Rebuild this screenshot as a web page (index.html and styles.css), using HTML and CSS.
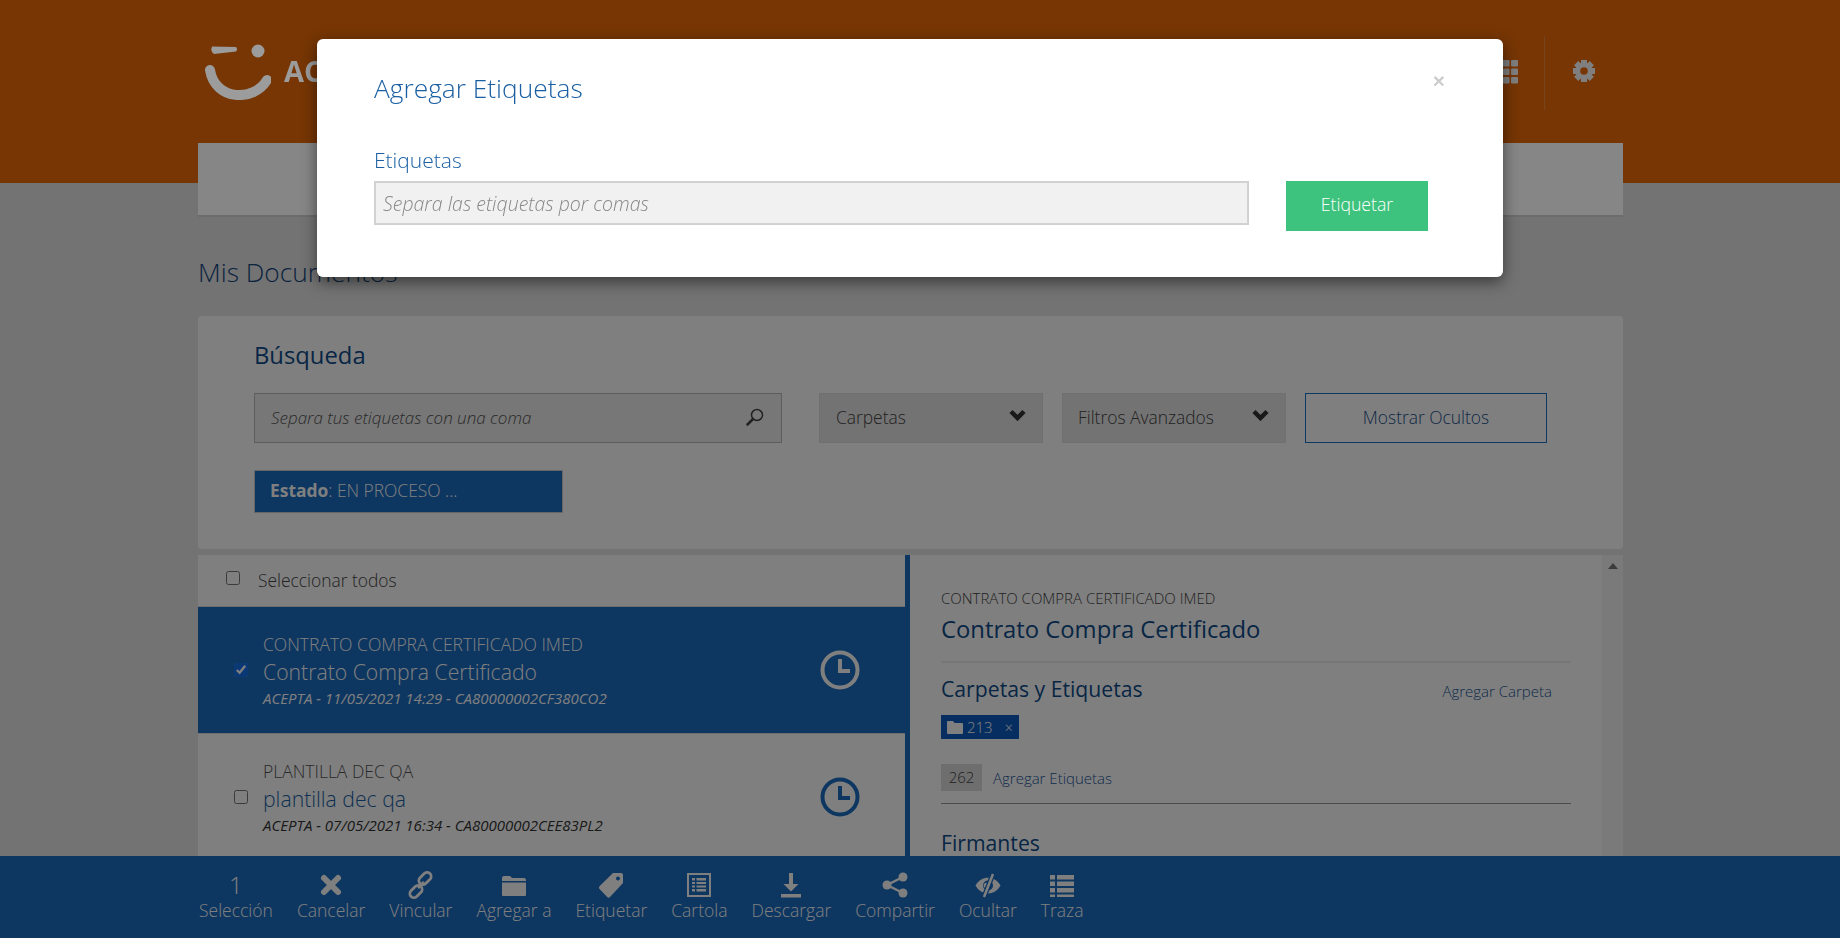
FILE: index.html
```html
<!DOCTYPE html>
<html lang="es">
<head>
<meta charset="utf-8">
<title>Mis Documentos</title>
<link rel="stylesheet" href="styles.css">
</head>
<body>
<header class="topbar">
  <div class="topbar-inner">
    <a class="brand">
      <svg class="brand-mark" width="66" height="56" viewBox="0 0 66 56"><path d="M7 2.500 L31 3 Q33 5 31 7.500 L9 10 Q5 7 7 2.500Z" class="fill-logo"/><circle cx="53" cy="7" r="6.500" class="fill-logo"/><path d="M5 26 C10 57 49 58 62 36" class="arc-logo"/></svg>
      <span class="brand-name">ACEPTA</span>
    </a>
    <div class="top-tools">
      <svg width="24" height="24" viewBox="0 0 24 24" class="fill-icon"><rect x="0" y="0" width="7" height="6.500" rx="1"/><rect x="8.500" y="0" width="7" height="6.500" rx="1"/><rect x="17" y="0" width="7" height="6.500" rx="1"/><rect x="0" y="8.500" width="7" height="6.500" rx="1"/><rect x="8.500" y="8.500" width="7" height="6.500" rx="1"/><rect x="17" y="8.500" width="7" height="6.500" rx="1"/><rect x="0" y="17" width="7" height="6.500" rx="1"/><rect x="8.500" y="17" width="7" height="6.500" rx="1"/><rect x="17" y="17" width="7" height="6.500" rx="1"/></svg>
      <span class="tool-divider"></span>
      <svg width="26" height="26" viewBox="0 0 26 26" class="gear"><g class="gear-teeth"><path d="M13 2v22M2 13h22M5.200 5.200l15.600 15.600M20.800 5.200l-15.600 15.600"/></g><circle cx="13" cy="13" r="8.500"/><circle cx="13" cy="13" r="3.800" class="gear-hole"/></svg>
    </div>
  </div>
</header>

<main class="page">
  <nav class="subnav"></nav>
  <h1 class="page-title">Mis Documentos</h1>

  <section class="search-card">
    <h2 class="search-title">Búsqueda</h2>
    <div class="search-row">
      <div class="search-box">
        <input class="search-input" type="text" placeholder="Separa tus etiquetas con una coma">
        <svg width="18" height="18" viewBox="0 0 18 18" class="search-icon"><circle cx="11" cy="7" r="5.500"/><path d="M7 11 L1.500 16.500" class="search-handle"/></svg>
      </div>
      <div class="dropdown"><span>Carpetas</span><svg width="17" height="12" viewBox="0 0 17 12"><path d="M2 2.500 L8.500 9 L15 2.500" class="chev"/></svg></div>
      <div class="dropdown"><span>Filtros Avanzados</span><svg width="17" height="12" viewBox="0 0 17 12"><path d="M2 2.500 L8.500 9 L15 2.500" class="chev"/></svg></div>
      <button class="ghost-btn" type="button">Mostrar Ocultos</button>
    </div>
    <div class="status-chip"><strong>Estado</strong>: EN PROCESO ...</div>
  </section>

  <section class="docs">
    <div class="doc-list">
      <label class="select-all"><input type="checkbox"><span>Seleccionar todos</span></label>
      <article class="doc-row doc-row-active">
        <input type="checkbox" checked>
        <div class="doc-text">
          <div class="doc-kind">CONTRATO COMPRA CERTIFICADO IMED</div>
          <div class="doc-name">Contrato Compra Certificado</div>
          <div class="doc-meta">ACEPTA - 11/05/2021 14:29 - CA80000002CF380CO2</div>
        </div>
        <svg class="clock" width="40" height="40" viewBox="0 0 40 40"><circle cx="20" cy="20" r="17.500"/><path d="M20 9v12h10"/></svg>
      </article>
      <article class="doc-row">
        <input type="checkbox">
        <div class="doc-text">
          <div class="doc-kind">PLANTILLA DEC QA</div>
          <div class="doc-name">plantilla dec qa</div>
          <div class="doc-meta">ACEPTA - 07/05/2021 16:34 - CA80000002CEE83PL2</div>
        </div>
        <svg class="clock" width="40" height="40" viewBox="0 0 40 40"><circle cx="20" cy="20" r="17.500"/><path d="M20 9v12h10"/></svg>
      </article>
    </div>

    <div class="detail">
      <div class="detail-kind">CONTRATO COMPRA CERTIFICADO IMED</div>
      <div class="detail-name">Contrato Compra Certificado</div>
      <hr class="rule-soft">
      <div class="detail-head">
        <h3 class="detail-title">Carpetas y Etiquetas</h3>
        <a class="detail-link link-carpeta">Agregar Carpeta</a>
      </div>
      <div class="tags">
        <span class="folder-tag">
          <svg width="16" height="13" viewBox="0 0 16 13"><path d="M1 0h5l1.500 2H15a1 1 0 0 1 1 1v9a1 1 0 0 1-1 1H1a1 1 0 0 1-1-1V1a1 1 0 0 1 1-1z"/></svg>
          213<span class="tag-x">×</span>
        </span>
      </div>
      <div class="label-row">
        <span class="count-badge">262</span>
        <a class="detail-link">Agregar Etiquetas</a>
      </div>
      <hr class="rule-strong">
      <h3 class="detail-title firmantes">Firmantes</h3>
    </div>

    <div class="scroll-track"><span class="scroll-up"></span></div>
  </section>
</main>

<footer class="action-bar">
  <div class="action"><span class="action-count">1</span><span>Selección</span></div>
  <div class="action"><svg width="26" height="26" viewBox="0 0 26 26"><path d="M6 6 L20 20 M20 6 L6 20" class="x-mark"/></svg><span>Cancelar</span></div>
  <div class="action"><svg width="26" height="26" viewBox="0 0 26 26"><g class="link-mark"><rect x="13" y="-.5" width="8" height="14" rx="4" transform="rotate(45 17 6.500)"/><rect x="4" y="12.500" width="8" height="14" rx="4" transform="rotate(45 8 19.500)"/><path d="M10 16 L16 10"/></g></svg><span>Vincular</span></div>
  <div class="action"><svg width="26" height="26" viewBox="0 0 26 26"><path d="M1 6a2 2 0 0 1 2-2h6l2 2h12a2 2 0 0 1 2 2v1H1z M1 10.500h24V23a1 1 0 0 1-1 1H2a1 1 0 0 1-1-1z"/></svg><span>Agregar a</span></div>
  <div class="action"><svg width="26" height="26" viewBox="0 0 26 26"><path fill-rule="evenodd" d="M15 1h8a2 2 0 0 1 2 2v8L12 25a2 2 0 0 1-2.800 0L1.500 17a2 2 0 0 1 0-2.800z M20 4.500a2 2 0 1 0 .01 0z"/></svg><span>Etiquetar</span></div>
  <div class="action"><svg width="26" height="26" viewBox="0 0 26 26"><path fill-rule="evenodd" d="M1 1h24v24H1z M3 3v20h20V3z M6 6h3v2.500H6z M10.500 6H20v2.500h-9.500z M6 10h3v2H6z M10.500 10H20v2h-9.500z M6 13.500h3v2H6z M10.500 13.500H20v2h-9.500z M6 17h3v2.500H6z M10.500 17H20v2.500h-9.500z"/></svg><span>Cartola</span></div>
  <div class="action"><svg width="26" height="26" viewBox="0 0 26 26"><path d="M11 1h4v11h5.500L13 19.500 5.500 12H11z M3 22h20v3.500H3z"/></svg><span>Descargar</span></div>
  <div class="action"><svg width="26" height="26" viewBox="0 0 26 26"><circle cx="21" cy="5" r="4.500"/><circle cx="5" cy="13" r="4.500"/><circle cx="21" cy="21" r="4.500"/><path d="M21 5 L5 13 L21 21" class="share-lines"/></svg><span>Compartir</span></div>
  <div class="action"><svg width="26" height="26" viewBox="0 0 26 26"><path d="M.5 13.500C6 3 20 3 25.500 13.500 20 24 6 24 .5 13.500z"/><circle cx="13" cy="13.500" r="5" class="eye-cut"/><circle cx="11.500" cy="13.500" r="2.800"/><path d="M18 2 L9 25" class="eye-gap"/><path d="M18 2 L9 25" class="eye-slash"/></svg><span>Ocultar</span></div>
  <div class="action"><svg width="26" height="26" viewBox="0 0 26 26"><path d="M1 3h5v4.500H1z M8 3h17v4.500H8z M1 9.500h5V14H1z M8 9.500h17V14H8z M1 16h5v4.500H1z M8 16h17v4.500H8z M1 22.500h5V25H1z M8 22.500h17V25H8z"/></svg><span>Traza</span></div>
</footer>

<div class="backdrop"></div>

<div class="modal" role="dialog">
  <button class="modal-close" type="button">×</button>
  <h2 class="modal-title">Agregar Etiquetas</h2>
  <label class="modal-label" for="tags">Etiquetas</label>
  <div class="modal-row">
    <input id="tags" class="modal-input" type="text" placeholder="Separa las etiquetas por comas">
    <button class="modal-submit" type="button">Etiquetar</button>
  </div>
</div>
</body>
</html>
```

FILE: styles.css
```css
* { box-sizing: border-box; }
html, body { margin: 0; height: 938px; overflow: hidden; }
body { background: #e6e6e6; font-family: "Open Sans", "Liberation Sans", sans-serif; color: #333; font-size: 17.4px; font-weight: 300; position: relative; }

.topbar { height: 183px; background: #ee6c08; }
.topbar-inner { width: 1425px; margin-left: 198px; height: 143px; display: flex; justify-content: space-between; align-items: flex-start; }
.brand { display: flex; margin: 44px 0 0 7px; gap: 13px; position: relative; z-index: 1; }
.brand-name { font-weight: 700; font-size: 29px; line-height: 40px; margin-top: 7px; color: #9c9c9c; }
.fill-logo { fill: #9c9c9c; }
.arc-logo { fill: none; stroke: #9c9c9c; stroke-width: 10; stroke-linecap: round; }
.top-tools { display: flex; align-items: flex-start; margin: 36px 26px 0 0; }
.top-tools > svg:first-child { margin-top: 24px; }
.fill-icon { fill: #fff; }
.tool-divider { width: 1px; height: 74px; background: rgba(255,255,255,.2); margin: 0 26px; }
.gear { margin-top: 22px; fill: #fff; }
.gear-teeth path { stroke: #fff; stroke-width: 6; fill: none; }
.gear-hole { fill: #ee6c08; }

.page { width: 1425px; margin: -40px 0 0 198px; }
.subnav { height: 74px; background: #868686; border-bottom: 2px solid #6c6c6c; position: relative; z-index: 1; }
.page-title { margin: 39px 0 28px; font-size: 26.300px; line-height: 32px; font-weight: 300; color: #15487f; }

.search-card { height: 233px; background: #fff; border-radius: 4px; padding: 24px 0 0 56px; }
.search-title { margin: 0 0 23px; font-size: 23.800px; line-height: 30px; font-weight: 400; color: #0f4c8a; }
.search-row { display: flex; align-items: stretch; height: 50px; }
.search-box { width: 528px; position: relative; margin-right: 37px; }
.search-input { width: 100%; height: 100%; background: #eee; border: 1px solid #bbb; padding: 0 16px 2px; font: italic 300 17px "Open Sans", sans-serif; outline: 0; }
.search-input::placeholder { color: #555; opacity: 1; }
.search-icon { position: absolute; right: 18px; top: 15px; }
.search-icon circle { fill: none; stroke: #444; stroke-width: 1.500; }
.search-handle { stroke: #444; stroke-width: 2.500; stroke-linecap: round; }
.dropdown { width: 224px; margin-right: 19px; background: #e6e6e6; border: 1px solid #e0e0e0; display: flex; justify-content: space-between; align-items: flex-start; padding: 11px 16px 0 16px; line-height: 24px; color: #444; }
.dropdown svg { margin-top: 4px; }
.dropdown + .dropdown span { margin-left: -1px; }
.chev { fill: none; stroke: #333; stroke-width: 4.500; }
.ghost-btn { width: 242px; margin-left: 0; background: transparent; border: 1px solid #1c6ec2; color: #1c4f8c; font: 300 17.400px "Open Sans", sans-serif; padding: 0 0 2px; }
.status-chip { width: 309px; height: 43px; margin-top: 27px; background: #1a6cc2; border: 1px solid #ccc; color: #fff; padding-left: 15px; line-height: 39px; }
.status-chip strong { font-weight: 700; }

.docs { display: grid; grid-template-columns: 707px 5px 692px 21px; grid-template-rows: 400px; margin-top: 6px; }
.doc-list { grid-column: 1; background: #fff; }
.select-all { display: flex; align-items: center; height: 52px; padding-left: 28px; border-bottom: 1px solid #ddd; gap: 18px; color: #444; padding-bottom: 2px; }
input[type=checkbox] { width: 14px; height: 14px; margin: 0; accent-color: #1470e8; flex: none; }
.select-all input { margin-top: -4px; }
.doc-row { height: 127px; display: flex; align-items: center; padding-left: 36px; border-bottom: 1px solid #ddd; }
.doc-row-active { background: #1a6cc2; color: #fff; }
.doc-text { align-self: flex-start; margin-left: 15px; padding-top: 27px; }
.doc-kind { line-height: 20px; font-size: 17.500px; color: #555; }
.doc-name { line-height: 28px; font-size: 21.200px; margin-top: 4px; color: #1a5fa3; }
.doc-row-active .doc-kind, .doc-row-active .doc-name { color: #fff; }
.doc-meta { line-height: 20px; font-size: 15px; font-style: italic; font-weight: 400; margin-top: 2px; }
.clock { margin-left: auto; margin-right: 45px; fill: none; stroke: #1a6cc2; stroke-width: 4; }
.doc-row-active .clock { stroke: #fff; }

.detail { grid-column: 3; background: #fff; border-left: 5px solid #1a6cc2; margin-left: -5px; padding: 33px 31px 0 31px; overflow: hidden; width: 697px; }
.detail-kind { line-height: 20px; font-size: 15px; color: #444; }
.detail-name { line-height: 32px; font-size: 23.800px; font-weight: 400; color: #0f4c8a; margin-top: 5px; }
.rule-soft { margin: 16px 0 0; border: 0; border-top: 2px solid #eee; }
.detail-head { display: flex; justify-content: space-between; margin-top: 12px; height: 28px; line-height: 28px; }
.detail-title { margin: 0; font-size: 21.200px; font-weight: 400; color: #0f4c8a; line-height: 28px; }
.detail-link { font-size: 15px; color: #1a5796; }
.link-carpeta { margin-right: 19px; margin-top: 2px; }
.tags { margin-top: 12px; height: 24px; display: flex; }
.folder-tag { background: #0c5cc0; color: #fff; height: 24px; width: 78px; font-size: 15px; display: flex; align-items: center; padding-left: 6px; gap: 4px; }
.folder-tag svg { fill: #fff; flex: none; }
.tag-x { margin-left: 8px; font-size: 14px; }
.label-row { margin-top: 25px; height: 27px; display: flex; align-items: center; gap: 11px; }
.count-badge { width: 41px; height: 27px; background: #ddd; text-align: center; line-height: 27px; font-size: 15px; color: #444; }
.rule-strong { margin: 12px 0 0; border: 0; border-top: 1px solid #999; }
.firmantes { margin-top: 25px; }
.scroll-track { grid-column: 4; background: #f5f5f5; position: relative; }
.scroll-up { position: absolute; left: 6px; top: 8px; width: 0; height: 0; border: 5px solid transparent; border-top: 0; border-bottom: 6px solid #777; }

.action-bar { position: fixed; left: 0; right: 0; bottom: 0; height: 82px; background: #1a6cc2; display: flex; gap: 24px; padding: 15px 0 0 199px; color: #fff; font-size: 17.500px; }
.action { display: flex; flex-direction: column; align-items: center; line-height: 22px; }
.action svg { height: 28px; width: 26px; fill: #fff; display: block; }
.action-count { font-size: 24px; line-height: 28px; height: 28px; }
.x-mark { fill: none; stroke: #fff; stroke-width: 6; stroke-linecap: round; }
.link-mark { fill: none; stroke: #fff; stroke-width: 2.800; }
.share-lines { fill: none; stroke: #fff; stroke-width: 2.500; }
.action .eye-cut { fill: #1a6cc2; }
.eye-gap { fill: none; stroke: #1a6cc2; stroke-width: 5; }
.eye-slash { fill: none; stroke: #fff; stroke-width: 2.500; }

.backdrop { position: fixed; inset: 0; background: rgba(0,0,0,.5); }
.modal { position: absolute; z-index: 2; left: 317px; top: 39px; width: 1186px; height: 238px; background: #fff; border-radius: 6px; padding: 32px 57px 0; box-shadow: 0 5px 15px rgba(0,0,0,.5); }
.modal-title { margin: 0; font-size: 26.300px; line-height: 34px; font-weight: 300; color: #1a5fa3; }
.modal-label { display: block; margin-top: 43px; font-size: 21px; line-height: 24px; color: #1a5fa3; }
.modal-row { display: flex; align-items: flex-start; margin-top: 9px; gap: 37px; }
.modal-input { width: 875px; height: 44px; background: #f1f1f1; border: 2px solid #d2d2d2; padding: 0 7px; font: italic 300 19.500px "Open Sans", sans-serif; outline: 0; }
.modal-input::placeholder { color: #888; opacity: 1; }
.modal-submit { width: 142px; height: 50px; background: #3dc37e; border: 0; color: #fff; font: 300 17.700px "Open Sans", sans-serif; padding: 0 0 4px; }
.modal-close { position: absolute; right: 55px; top: 26px; width: 18px; height: 32px; padding: 0; background: none; border: 0; font: 700 21px/32px "Liberation Sans", sans-serif; color: #000; opacity: .2; }
```
